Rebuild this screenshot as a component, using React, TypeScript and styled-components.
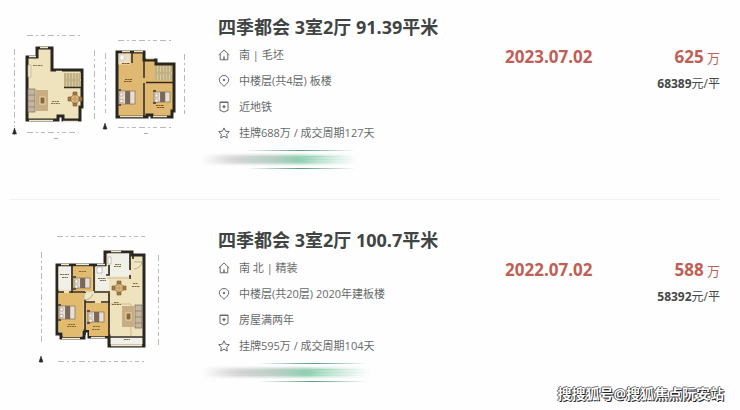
import React from "react";
import styled, { createGlobalStyle } from "styled-components";

const GlobalStyle = createGlobalStyle`
  * { box-sizing: border-box; }
  body {
    margin: 0;
    background: #fefefe;
    color: #666a69;
    font-family: "Open Sans", "Noto Sans CJK SC", sans-serif;
  }
`;

const Page = styled.main`
  position: relative;
  padding: 0 20px 0 10px;
`;

const Listing = styled.article`
  display: grid;
  grid-template-columns: 208px minmax(0, 1fr) 90px 125px;
  height: 200px;
  & + & {
    margin-top: 13px;
    height: 197px;
  }
  &:not(:last-of-type) {
    border-bottom: 1px solid #f0f1f0;
  }
`;

const Plan = styled.svg`
  display: block;
  width: 190px;
  height: 150px;
`;

const Info = styled.div`
  padding-top: 14px;
`;

const Title = styled.h2`
  margin: 0 0 2px;
  color: #404443;
  font-size: 18px;
  line-height: 26px;
  font-weight: 700;
  white-space: nowrap;
`;

const Facts = styled.ul`
  margin: 0;
  padding: 0;
  list-style: none;
`;

const Fact = styled.li`
  display: flex;
  align-items: center;
  gap: 9px;
  height: 26px;
  font-size: 11px;
  line-height: 16px;
  white-space: nowrap;
`;

const FactIcon = styled.svg`
  width: 12px;
  height: 12px;
  fill: none;
  stroke: #666a69;
  stroke-width: 1;
`;

const Streaks = styled.svg`
  display: block;
  width: 180px;
  height: 24px;
  margin: 2px 0 0 -18px;
`;

const SoldDate = styled.time`
  padding-top: 45px;
  color: #c05f55;
  font-size: 17px;
  line-height: 24px;
  font-weight: 700;
  white-space: nowrap;
`;

const Price = styled.div`
  padding-top: 45px;
  text-align: right;
  white-space: nowrap;
`;

const Total = styled.p`
  margin: 0;
  color: #c05f55;
  font-size: 13px;
  line-height: 24px;
`;

const Amount = styled.strong`
  font-size: 17px;
`;

const UnitPrice = styled.p`
  margin: 6px 0 0;
  color: #454948;
  font-size: 12px;
  line-height: 16px;
`;

const UnitAmount = styled.strong`
  font-size: 12px;
`;

const Watermark = styled.footer`
  position: absolute;
  right: 16px;
  bottom: 6px;
  color: #fff;
  font-size: 14px;
  line-height: 20px;
  font-weight: 700;
  white-space: nowrap;
  text-shadow: 1px 1px 0 #222, -1px 0 0 #444, 0 -1px 0 #777;
`;

type IconName = "home" | "pin" | "tag" | "star";

const Icon = ({ name }: { name: IconName }) => (
  <FactIcon viewBox="0 0 12 12" aria-hidden="true">
    {name === "home" && (
      <>
        <path d="M.7 6 6 1l5.300 5M2.200 5v5.800h7.600V5" />
        <path d="M6 7.500v3.300" strokeWidth="1.500" />
      </>
    )}
    {name === "pin" && (
      <>
        <path d="M6 11.300C3.500 9 1.300 7.300 1.300 4.900a4.700 4.400 0 0 1 9.400 0C10.700 7.300 8.500 9 6 11.300Z" />
        <circle cx="6" cy="5" r=".8" fill="#666a69" />
      </>
    )}
    {name === "tag" && (
      <>
        <path d="M2 1h8v8.300L6 11 2 9.300ZM2 1.500h8" />
        <path d="M6 4v3.200M4.400 5.600h3.200" strokeWidth="1.300" />
      </>
    )}
    {name === "star" && (
      <path d="m6 .9 1.600 3.300 3.700.5-2.700 2.600.7 3.700L6 9.300 2.700 11l.7-3.700L.7 4.700l3.700-.5Z" />
    )}
  </FactIcon>
);

const Swoosh = ({ id, shift }: { id: string; shift: number }) => (
  <Streaks viewBox="0 0 180 24" aria-hidden="true">
    <defs>
      <linearGradient id={id + "g"}>
        <stop offset="0" stopColor="#bbb" stopOpacity="0" />
        <stop offset=".22" stopColor="#c2c4c3" stopOpacity=".7" />
        <stop offset=".45" stopColor="#b0cbbf" stopOpacity=".9" />
        <stop offset=".62" stopColor="#8ccfae" />
        <stop offset=".82" stopColor="#b5dfcc" stopOpacity=".6" />
        <stop offset="1" stopColor="#c7e7d9" stopOpacity="0" />
      </linearGradient>
      <linearGradient id={id + "l"}>
        <stop offset="0" stopColor="#5b9a80" stopOpacity="0" />
        <stop offset=".5" stopColor="#5b987f" />
        <stop offset="1" stopColor="#5b9a80" stopOpacity="0" />
      </linearGradient>
      <filter id={id + "b"} x="-.1" y="-1" width="1.2" height="3">
        <feGaussianBlur stdDeviation="3 1.600" />
      </filter>
    </defs>
    <g fill={`url(#${id}g)`}>
      <rect x="2" y="7" width={156 + shift} height="9" filter={`url(#${id}b)`} />
      <rect x={40 + shift} y="8" width="115" height="1" opacity=".7" />
      <rect x="12" y="11" width={150 + shift} height="1" opacity=".4" />
      <rect x="25" y="14" width={130 + shift} height="1" opacity=".4" />
    </g>
    <g fill={`url(#${id}l)`}>
      <rect x={46 + shift} y="2" width="110" height="1" />
      <rect x={46 + shift} y="20" width="110" height="1" />
    </g>
  </Streaks>
);

const Bed = ({ x, y, w = 16, h = 13 }: { x: number; y: number; w?: number; h?: number }) => (
  <g>
    <rect x={x} y={y} width={w} height={h} fill="#e7dfd2" stroke="#725f4b" strokeWidth=".6" />
    <rect x={x + w * 0.38} y={y} width={w * 0.32} height={h} fill="#79675c" />
    <path d={`M${x + 1} ${y + 2}h3v3h-3zm0 ${h / 2}h3v3h-3z`} fill="#fff" stroke="#705a45" strokeWidth=".4" />
    <path d={`M${x - 1} ${y - 2}h3v2h-3zm0 ${h + 2}h3v2h-3z`} fill="#625044" />
  </g>
);

const Dining = ({ x, y }: { x: number; y: number }) => (
  <g fill="#a77b43" stroke="#765831" strokeWidth=".6">
    <path d={`M${x - 2} ${y - 7}h4v3h-4zm0 11h4v3h-4zM${x - 7} ${y - 2}h3v4h-3zm11 0h3v4h-3z`} />
    <circle cx={x} cy={y} r="4.3" fill="#d8b77f" />
    <path d={`M${x - 4} ${y}h8M${x} ${y - 4}v8`} stroke="#b58b50" />
  </g>
);

const Sofa = ({ x, y, flip = false }: { x: number; y: number; flip?: boolean }) => (
  <g>
    <rect x={x + (flip ? -13 : 8)} y={y} width="12" height="21" fill="#c7ad83" />
    <rect x={x + (flip ? -9 : 12)} y={y + 7} width="5" height="7" fill="#88673e" stroke="#eed8a9" />
    <rect x={x} y={y - 1} width="7" height="23" fill="#c5b69e" stroke="#756b60" strokeWidth=".7" />
    <path d={`M${x} ${y + 5}h7m-7 6h7m-7 6h7`} stroke="#82766b" strokeWidth=".7" />
  </g>
);

const Stairs = ({ x, y }: { x: number; y: number }) => (
  <g>
    <rect x={x} y={y} width="17" height="14" fill="#dacb9d" />
    <path
      d={`M${x + 1} ${y}v6m3-6v6m3-6v6m3-6v6m3-6v6m3-6v6M${x + 1} ${y + 8}v6m3-6v6m3-6v6m3-6v6m3-6v6m3-6v6M${x} ${y + 7}h16`}
      stroke="#8e805d"
      strokeWidth=".7"
    />
  </g>
);

const Compass = ({ x, y }: { x: number; y: number }) => (
  <path d={`M${x} ${y - 5}l2 6h-4ZM${x} ${y + 1}v1`} fill="#292929" stroke="#292929" strokeWidth=".5" />
);

const DuplexPlan = () => (
  <Plan viewBox="10 0 190 150" role="img" aria-label="四季都会 91.39平米户型图">
    <g fill="none" stroke="#b9b9b9" strokeWidth="1" strokeDasharray="6 3 2 3 4 3">
      <path d="M27 35.500h56M14.500 49v78M94.500 50v70M27 132.500h52M118 40.500h56M105.500 53v62M184.500 54v62M118 127.500h54" />
    </g>
    <path d="M54 138.500h4M144 133.500h4" stroke="#aaa" fill="none" />
    <path
      d="M27 57h10v-9h15v22h30v37h-2v13H63v-4h-5v4H27Z"
      fill="#efe3bd"
      stroke="#292620"
      strokeWidth="3"
      strokeLinejoin="miter"
    />
    <path d="M29 56.500h7M40 47.500h8M29 120.500h24M63 121.500h15M56 71.500h6" stroke="#eee6c9" strokeWidth="1.500" />
    <path d="M28 65h3v12h-3z" fill="#f0ead1" stroke="#b6aa85" strokeWidth=".6" />
    <path d="M33 65.500h10M52 101.500h7m-8 2h9" stroke="#8a7546" strokeDasharray="2 .5" />
    <Stairs x={64} y={73} />
    <path d="M64 87.500h17" stroke="#302c24" strokeWidth="1.500" />
    <Sofa x={28} y={90} />
    <Dining x={75} y={99} />
    <path d="M117 52h27v8h12v4h18v47h-2v6h-20v-2h-5v2h-30Z" fill="#dfb972" stroke="#292620" strokeWidth="3" />
    <path d="M118.500 53.500h12v11h-12z" fill="#ebe1c2" />
    <path d="M120 55h4v5h-4z" fill="#fff" stroke="#aaa" strokeWidth=".5" />
    <path d="M122 51.500h8m4 0h9M146 58.500h8M120 116.500h23M153 116.500h14" stroke="#eee0bb" strokeWidth="1.500" />
    <path d="M132 51v12M144 60v18m0 5v33M146 82.500h27" stroke="#302b23" strokeWidth="1.500" fill="none" />
    <Stairs x={155} y={66} />
    <Bed x={119} y={91} />
    <Bed x={154} y={92} h={10} />
    <path d="M122 63.500h8M125 79.500h7m-8 2h8M156 105.500h8m-7 2h7" stroke="#795522" strokeDasharray="2 .5" />
    <Compass x={14.5} y={133} />
    <Compass x={105} y={128} />
  </Plan>
);

const FlatPlan = () => (
  <Plan viewBox="10 213 190 150" role="img" aria-label="四季都会 100.7平米户型图">
    <g fill="none" stroke="#b9b9b9" strokeWidth="1" strokeDasharray="6 3 2 3 4 3">
      <path d="M57 236.500h88M41.500 252v93M158.500 255v91M58 361.500h86" />
    </g>
    <path
      d="M57 265h48v-13h27v3h12v91h-35v-10h-3v1H89v-6h-5v7H61v-4h-4Z"
      fill="#efe3bd"
      stroke="#292620"
      strokeWidth="3"
    />
    <path d="M58.500 293h25v38h-2v6H63v-5h-4.500zM72.500 266.500h20v25h-20zM86 303h23v33H89v-6h-3z" fill="#e2bb6f" />
    <path d="M58.500 266.500h13v23h-13zM96 266.500h13v24H96zM108 253.500h22v23h-22zM111 336.500h31v8h-31z" fill="#f0efe8" />
    <path d="M61 264.500h8m7 0h13m8 0h8M111 251.500h10M62 338.500h18M91 337.500h14M111 345.500h31" stroke="#f4ead0" strokeWidth="1.500" />
    <path
      d="M72 265v28m22-28v26M57 292h7m5 0h16m9 0h16M85 292v43m0-33h10m6 0h9m-1-37v10h-3m3 18v43m0 1h35M130 252v18m0 5v4m3-23v3"
      stroke="#302b23"
      strokeWidth="1.700"
      fill="none"
    />
    <path d="M84 293v7q6 0 9-6M134 262h8q-1 6-8 7" stroke="#9f926c" fill="#f0e8cc" strokeWidth=".7" />
    <path d="M107 278h23M110 304h21v32" fill="none" stroke="#c6a775" strokeWidth=".7" />
    <path d="M108 257h3v7h-3zM97 267h5v6h-5z" stroke="#888" strokeWidth=".5" fill="#fff" />
    <Bed x={59} y={306} />
    <Bed x={74} y={278} h={10} />
    <Bed x={88} y={312} h={10} />
    <Dining x={119} y={288} />
    <Sofa x={135} y={306} flip />
    <path d="M60 274.500h9m-7 3h6M79 271.500h7M98 278.500h8m-6 2h6M115 264.500h6m-7 2h7M68 324.500h7m-8 2h9M93 326.500h7m-8 3h8M114 302.500h5m-7 2h9M133 283.500h5m-6 3h8M124 339.500h6" stroke="#81693e" strokeDasharray="2 .5" />
    <Compass x={41} y={361} />
  </Plan>
);

const listings = [
  {
    id: "duplex",
    title: "四季都会 3室2厅 91.39平米",
    facts: ["南 | 毛坯", "中楼层(共4层) 板楼", "近地铁", "挂牌688万 / 成交周期127天"],
    date: "2023.07.02",
    total: "625",
    unit: "68389",
    shift: 0,
    plan: <DuplexPlan />,
  },
  {
    id: "flat",
    title: "四季都会 3室2厅 100.7平米",
    facts: ["南 北 | 精装", "中楼层(共20层) 2020年建板楼", "房屋满两年", "挂牌595万 / 成交周期104天"],
    date: "2022.07.02",
    total: "588",
    unit: "58392",
    shift: 12,
    plan: <FlatPlan />,
  },
];

const icons: IconName[] = ["home", "pin", "tag", "star"];

export default function App() {
  return (
    <>
      <GlobalStyle />
      <Page>
        {listings.map((item) => (
          <Listing key={item.id}>
            {item.plan}
            <Info>
              <Title>{item.title}</Title>
              <Facts>
                {item.facts.map((fact, i) => (
                  <Fact key={fact}>
                    <Icon name={icons[i]} />
                    <span>{fact}</span>
                  </Fact>
                ))}
              </Facts>
              <Swoosh id={item.id} shift={item.shift} />
            </Info>
            <SoldDate dateTime={item.date.replaceAll(".", "-")}>{item.date}</SoldDate>
            <Price>
              <Total>
                <Amount>{item.total}</Amount> 万
              </Total>
              <UnitPrice>
                <UnitAmount>{item.unit}</UnitAmount>元/平
              </UnitPrice>
            </Price>
          </Listing>
        ))}
        <Watermark>搜搜狐号@搜狐焦点阮安站</Watermark>
      </Page>
    </>
  );
}
